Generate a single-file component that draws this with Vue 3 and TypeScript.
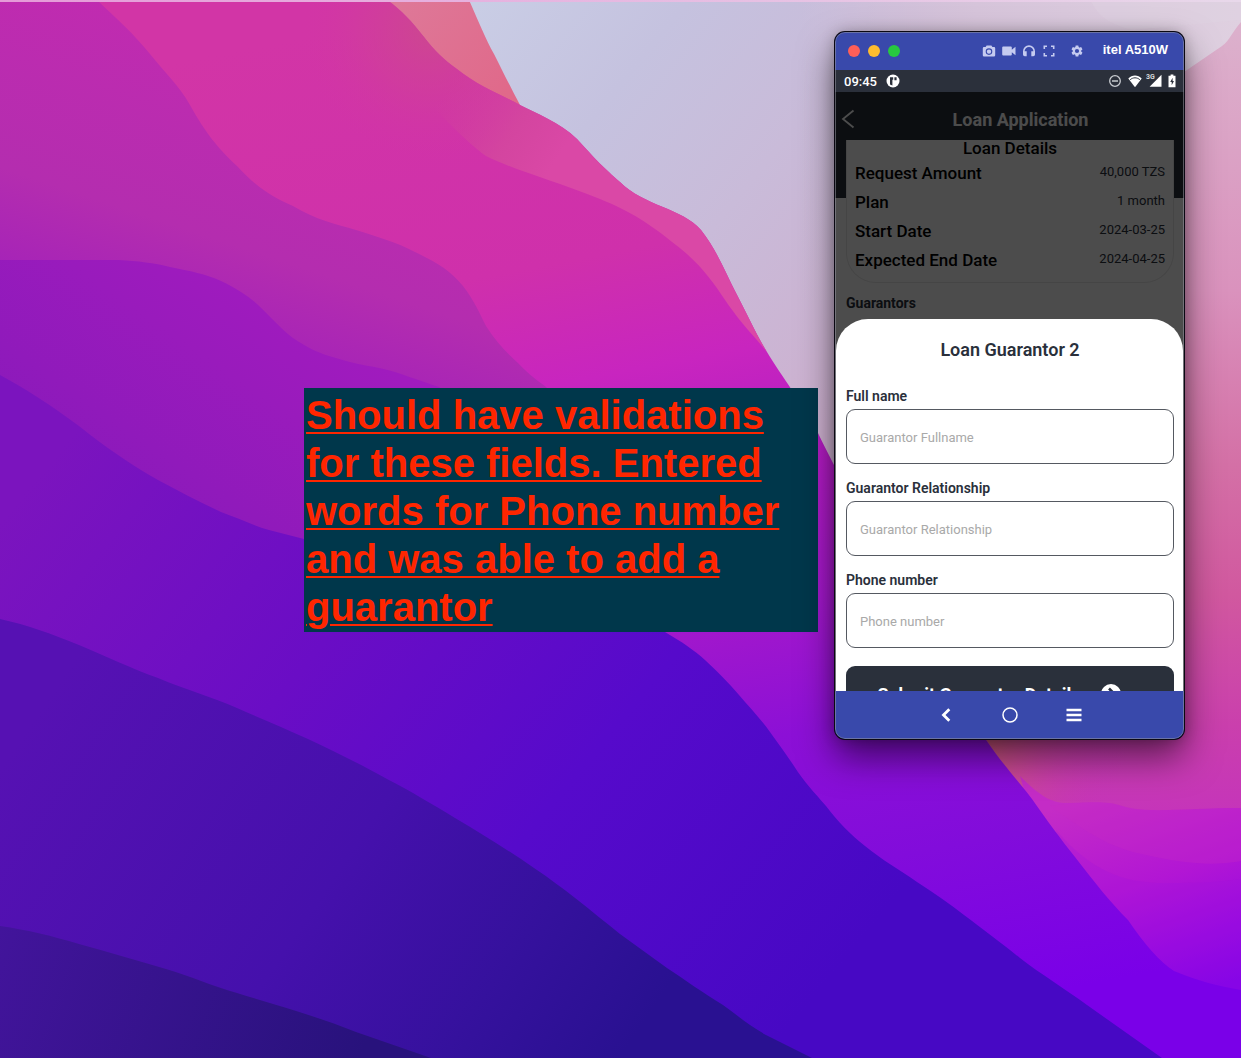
<script setup lang="ts">
import { reactive } from 'vue'

interface Detail {
  label: string
  value: string
}

interface Field {
  key: 'fullName' | 'relationship' | 'phone'
  label: string
  placeholder: string
  type: string
}

const details: Detail[] = [
  { label: 'Request Amount', value: '40,000 TZS' },
  { label: 'Plan', value: '1 month' },
  { label: 'Start Date', value: '2024-03-25' },
  { label: 'Expected End Date', value: '2024-04-25' },
]

const fields: Field[] = [
  { key: 'fullName', label: 'Full name', placeholder: 'Guarantor Fullname', type: 'text' },
  { key: 'relationship', label: 'Guarantor Relationship', placeholder: 'Guarantor Relationship', type: 'text' },
  { key: 'phone', label: 'Phone number', placeholder: 'Phone number', type: 'tel' },
]

const form = reactive({ fullName: '', relationship: '', phone: '' })
</script>

<template>
  <main class="desktop">
    <svg class="wallpaper" viewBox="0 0 1241 1058" preserveAspectRatio="xMidYMid slice" aria-hidden="true">
      <defs>
        <linearGradient id="sky" gradientUnits="userSpaceOnUse" x1="480" y1="0" x2="900" y2="340">
          <stop offset="0" stop-color="#c9cde5" />
          <stop offset=".3" stop-color="#c5c2df" />
          <stop offset=".6" stop-color="#c9bbd9" />
          <stop offset="1" stop-color="#cdb0cf" />
        </linearGradient>
        <linearGradient id="skyTop" gradientUnits="userSpaceOnUse" x1="800" y1="0" x2="1241" y2="0">
          <stop offset="0" stop-color="#d6c4da" stop-opacity="0" />
          <stop offset=".4" stop-color="#d6c4da" />
          <stop offset="1" stop-color="#dfd0e0" />
        </linearGradient>
        <linearGradient id="hill" gradientUnits="userSpaceOnUse" x1="0" y1="30" x2="0" y2="900">
          <stop offset="0" stop-color="#dcb0cc" />
          <stop offset=".3" stop-color="#da92bd" />
          <stop offset=".5" stop-color="#d470a6" />
          <stop offset=".65" stop-color="#d1589f" />
          <stop offset=".8" stop-color="#ca3fad" />
          <stop offset="1" stop-color="#c02ac6" />
        </linearGradient>
        <linearGradient id="glow" gradientUnits="userSpaceOnUse" x1="990" y1="750" x2="1110" y2="800">
          <stop offset="0" stop-color="#cf5580" />
          <stop offset="1" stop-color="#c631ba" stop-opacity="0" />
        </linearGradient>
        <linearGradient id="ridge" gradientUnits="userSpaceOnUse" x1="1080" y1="800" x2="1150" y2="1010">
          <stop offset="0" stop-color="#c42cc6" />
          <stop offset=".45" stop-color="#b216d4" />
          <stop offset=".75" stop-color="#980ae0" />
          <stop offset="1" stop-color="#8002e8" />
        </linearGradient>
        <linearGradient id="peach" gradientUnits="userSpaceOnUse" x1="400" y1="0" x2="510" y2="90">
          <stop offset="0" stop-color="#de7898" />
          <stop offset="1" stop-color="#e0698a" />
        </linearGradient>
        <linearGradient id="body" gradientUnits="userSpaceOnUse" x1="500" y1="0" x2="700" y2="1058">
          <stop offset="0" stop-color="#d235a6" />
          <stop offset=".25" stop-color="#cf30ab" />
          <stop offset=".36" stop-color="#c825bf" />
          <stop offset=".46" stop-color="#b41cc2" />
          <stop offset=".6" stop-color="#a318cb" />
          <stop offset=".72" stop-color="#8c10d6" />
          <stop offset=".85" stop-color="#820cdb" />
          <stop offset="1" stop-color="#7a00e8" />
        </linearGradient>
        <radialGradient id="blush" gradientUnits="userSpaceOnUse" cx="430" cy="30" r="130">
          <stop offset="0" stop-color="#cc4a8c" stop-opacity=".85" />
          <stop offset=".5" stop-color="#cf4296" stop-opacity=".45" />
          <stop offset="1" stop-color="#d235a6" stop-opacity="0" />
        </radialGradient>
        <linearGradient id="rim" gradientUnits="userSpaceOnUse" x1="440" y1="100" x2="550" y2="170">
          <stop offset="0" stop-color="#d04698" stop-opacity="0" />
          <stop offset=".6" stop-color="#d4489e" stop-opacity=".85" />
          <stop offset="1" stop-color="#da48a6" />
        </linearGradient>
        <linearGradient id="plum" gradientUnits="userSpaceOnUse" x1="150" y1="0" x2="50" y2="300">
          <stop offset="0" stop-color="#c12bb0" />
          <stop offset=".65" stop-color="#b42daf" />
          <stop offset=".9" stop-color="#a825b6" />
          <stop offset="1" stop-color="#a222ba" />
        </linearGradient>
        <linearGradient id="violet" gradientUnits="userSpaceOnUse" x1="330" y1="270" x2="130" y2="560">
          <stop offset="0" stop-color="#a41bbf" />
          <stop offset=".4" stop-color="#991bbc" />
          <stop offset="1" stop-color="#8719ba" />
        </linearGradient>
        <linearGradient id="indigo" gradientUnits="userSpaceOnUse" x1="60" y1="450" x2="780" y2="1040">
          <stop offset="0" stop-color="#7b14be" />
          <stop offset=".35" stop-color="#6a0dc5" />
          <stop offset=".65" stop-color="#560acb" />
          <stop offset="1" stop-color="#4708c4" />
        </linearGradient>
        <linearGradient id="navy" gradientUnits="userSpaceOnUse" x1="60" y1="680" x2="620" y2="1058">
          <stop offset="0" stop-color="#5611b3" />
          <stop offset=".5" stop-color="#4510ac" />
          <stop offset=".8" stop-color="#34119c" />
          <stop offset="1" stop-color="#291191" />
        </linearGradient>
        <linearGradient id="deep" gradientUnits="userSpaceOnUse" x1="0" y1="930" x2="360" y2="1058">
          <stop offset="0" stop-color="#42149b" />
          <stop offset="1" stop-color="#28127c" />
        </linearGradient>
        <linearGradient id="strip" x1="0" x2="1" y1="0" y2="0">
          <stop offset="0" stop-color="#e59ad8" />
          <stop offset="1" stop-color="#e8d8ea" />
        </linearGradient>
      </defs>
      <rect width="1241" height="1058" fill="url(#sky)" />
      <rect x="800" width="441" height="300" fill="url(#skyTop)" />
      <path d="M1090 0C1100 18 1110 24 1132 30L1241 20V0Z" fill="#dfd4e3" opacity=".35" />
      <path d="M1241 22C1232 32 1230 40 1222 46L1184 72L980 300V1058H1241Z" fill="url(#hill)" />
      <path d="M980 730H1241V803C1200 812 1160 813 1135 810C1115 800 1090 803 1050 803L1020 790Z" fill="url(#glow)" />
      <path d="M1020 776C1040 796 1052 804 1070 803C1095 802 1108 801 1122 806C1146 814 1190 808 1241 808V1058H1100Z" fill="url(#ridge)" />
      <path d="M1050 806C1085 830 1105 846 1142 854C1185 864 1212 866 1241 861V808C1190 808 1150 814 1122 806C1108 801 1080 802 1050 806Z" fill="#c62ac2" opacity=".3" />
      <path d="M1056 830C1092 872 1125 884 1170 883C1200 883 1220 882 1241 879V1058H1130Z" fill="#a010e0" opacity=".22" />
      <path d="M387 0H469C478 20 486 40 494 54C504 74 512 90 520 105L470 120Z" fill="url(#peach)" />
      <path
        d="M0 0H387C402 10 412 22 424 37C434 50 444 60 457 69C478 86 500 94 520 105C535 113 560 122 577 139C596 160 604 168 620 182C644 206 682 208 701 230C718 252 726 274 735 291C748 316 756 334 767 352C780 374 806 408 818 433C850 500 950 680 986 740C1004 766 1016 778 1032 799C1048 822 1060 838 1075 857C1096 884 1110 902 1128 920C1145 945 1160 962 1174 971C1200 982 1220 986 1241 990V1058H0Z"
        fill="url(#body)"
      />
      <path d="M240 0H387C402 10 412 22 424 37C434 50 444 60 457 69C478 86 500 94 520 105L577 139V260H240Z" fill="url(#blush)" />
      <path
        d="M387 0C402 10 412 22 424 37C434 50 444 60 457 69C478 86 500 94 520 105C535 113 560 122 577 139C596 160 604 168 620 182C644 206 682 208 701 230C718 252 726 274 735 291C748 316 756 334 767 352C747 328 740 322 723 297C704 268 690 256 676 245C650 224 632 212 600 199C552 180 514 170 486 156C450 130 390 60 340 0Z"
        fill="url(#rim)"
      />
      <path
        d="M0 0H97C116 18 134 34 150 54C166 74 178 84 190 105C206 134 218 148 237 166C256 187 274 198 293 206C316 220 336 224 356 230C378 237 396 242 415 252C436 262 450 270 463 286C474 300 480 314 486 326C496 342 508 354 518 363C530 376 540 382 546 387L600 440V560H0Z"
        fill="url(#plum)"
      />
      <path
        d="M0 260H119C138 261 154 263 170 267C190 271 206 274 221 281C236 288 248 296 257 304C270 316 280 328 293 338C306 347 320 354 336 358C356 365 376 366 395 372C416 379 430 384 439 387L520 440V600H0Z"
        fill="url(#violet)"
      />
      <path
        d="M0 375C28 390 52 406 79 426C104 446 130 464 158 480C180 492 200 502 221 512C238 518 252 525 269 530L304 539C450 560 610 590 665 632C682 642 694 650 705 660C718 672 728 682 739 695C750 708 760 718 770 732C780 746 786 754 794 766C804 782 814 792 826 806C838 822 850 834 865 846C882 860 900 870 917 882C934 893 950 904 964 915C984 930 1000 942 1020 958C1042 975 1064 988 1087 1005L1162 1058H0Z"
        fill="url(#indigo)"
      />
      <path
        d="M0 619C28 625 52 634 79 645C106 656 130 668 158 678C186 690 210 696 237 708C262 719 284 728 308 739C336 752 360 764 387 779C412 792 432 804 455 818C482 834 508 850 534 868C564 888 590 910 620 934L667 968C688 982 702 992 723 1005C738 1016 750 1026 766 1035L812 1058H0Z"
        fill="url(#navy)"
      />
      <path d="M0 926C28 930 52 936 79 944C108 952 136 960 166 969C190 976 212 986 237 993C276 1005 316 1016 356 1032L431 1058H0Z" fill="url(#deep)" />
      <rect width="1241" height="2" fill="url(#strip)" />
    </svg>

    <p class="note">
      Should have validations for these fields. Entered words for Phone number and was able to add a guarantor
    </p>

    <section class="phone" aria-label="itel A510W">
      <header class="titlebar">
        <div class="lights">
          <button type="button" class="light red" aria-label="Close"></button>
          <button type="button" class="light yellow" aria-label="Minimise"></button>
          <button type="button" class="light green" aria-label="Zoom"></button>
        </div>
        <div class="tools">
          <button type="button" aria-label="Take screenshot">
            <svg viewBox="0 0 14 14"><path fill-rule="evenodd" d="M4.6 1.5h4.8l1 1.5H12a1.2 1.2 0 0 1 1.2 1.2v7A1.2 1.2 0 0 1 12 12.400H2A1.200 1.200 0 0 1 .8 11.200v-7A1.200 1.200 0 0 1 2 3h1.600zM7 4.300a3.300 3.300 0 1 0 0 6.600 3.300 3.300 0 0 0 0-6.600m0 1.100a2.200 2.200 0 1 1 0 4.400 2.200 2.200 0 0 1 0-4.400" /></svg>
          </button>
          <button type="button" aria-label="Record video">
            <svg viewBox="0 0 14 14"><path d="M1.200 2.500h7.600a1 1 0 0 1 1 1v2.200l3.700-2.900v8.400L9.800 8.300v2.200a1 1 0 0 1-1 1H1.200a1 1 0 0 1-1-1v-7a1 1 0 0 1 1-1" /></svg>
          </button>
          <button type="button" aria-label="Audio">
            <svg viewBox="0 0 14 14"><path d="M7 1.300A6 6 0 0 0 1 7.300v3.200a1.700 1.700 0 0 0 1.700 1.700h2V7.300H2.600a4.400 4.400 0 0 1 8.800 0H9.300v4.900h2a1.700 1.700 0 0 0 1.700-1.700V7.300a6 6 0 0 0-6-6" /></svg>
          </button>
          <button type="button" aria-label="Full screen">
            <svg viewBox="0 0 14 14"><path d="M1.500 1.500H5v1.600H3.100V5H1.500zM9 1.500h3.500V5h-1.600V3.100H9zM1.500 9h1.600v1.900H5v1.600H1.500zM10.900 9h1.600v3.500H9v-1.600h1.900z" /></svg>
          </button>
          <button type="button" class="settings" aria-label="Settings">
            <svg viewBox="0 0 24 24"><path d="M19.140 12.940c.04-.3.06-.61.06-.94 0-.32-.02-.64-.07-.94l2.030-1.580a.49.49 0 0 0 .12-.61l-1.920-3.320a.488.488 0 0 0-.59-.22l-2.390.96c-.5-.38-1.030-.7-1.620-.94l-.36-2.540a.484.484 0 0 0-.48-.41h-3.840c-.24 0-.43.17-.47.41l-.36 2.540c-.59.24-1.130.57-1.620.94l-2.390-.96c-.22-.08-.47 0-.59.22L2.740 8.870c-.12.21-.08.47.12.61l2.030 1.580c-.05.3-.09.63-.09.94s.02.64.07.94l-2.030 1.580a.49.49 0 0 0-.12.61l1.920 3.320c.12.22.37.29.59.22l2.390-.96c.5.38 1.030.7 1.620.94l.36 2.540c.05.24.24.41.48.41h3.840c.24 0 .44-.17.47-.41l.36-2.540c.59-.24 1.130-.56 1.620-.94l2.390.96c.22.08.47 0 .59-.22l1.920-3.320c.12-.22.07-.47-.12-.61zM12 15.600A3.600 3.600 0 1 1 12 8.400a3.600 3.600 0 0 1 0 7.200" /></svg>
          </button>
        </div>
        <span class="device">itel A510W</span>
      </header>

      <div class="status">
        <span class="time">09:45</span>
        <svg class="app-dot" viewBox="0 0 14 14" aria-hidden="true">
          <circle cx="7" cy="7" r="6.500" fill="#fff" />
          <path d="M4 3.200h3.200v2.600H6.400v5.800L4 10.400zM8.400 3.200h2.200v3H8.400z" fill="#2b303b" />
        </svg>
        <div class="signals" aria-hidden="true">
          <svg viewBox="0 0 14 14" width="14" height="14">
            <circle cx="7" cy="7" r="5.300" fill="none" stroke="#c9ccd1" stroke-width="1.300" />
            <path d="M4 7h6" stroke="#c9ccd1" stroke-width="1.600" />
          </svg>
          <svg viewBox="0 0 14 14" width="14" height="14">
            <path d="M7 13.200.3 4.600C4 .6 10 .6 13.700 4.600z" fill="#fff" />
            <path d="M2.200 5.700C5 3.200 9 3.200 11.800 5.700" fill="none" stroke="#2b303b" stroke-width="1" />
          </svg>
          <span class="network">
            <span class="network-type">3G</span>
            <svg viewBox="0 0 14 14" width="14" height="14"><path d="M13.500.8v11.900H1.600z" fill="#fff" /></svg>
          </span>
          <svg viewBox="0 0 8 14" width="8" height="14">
            <path d="M2.600.5h2.800v1.300H7.500v11.400H.5V1.800h2.100z" fill="#fff" />
            <path d="M4.600 3.800 2.200 8h1.500v3.300L6 7H4.600z" fill="#2b303b" />
          </svg>
        </div>
      </div>

      <div class="screen">
        <div class="page">
          <header class="appbar">
            <button type="button" class="back" aria-label="Back">
              <svg viewBox="0 0 14 20" width="14" height="20"><path d="M12.500 1.500 2 10l10.500 8.500" fill="none" stroke="#fff" stroke-width="1.800" /></svg>
            </button>
            <h1>Loan Application</h1>
          </header>
          <section class="card">
            <h2>Loan Details</h2>
            <dl>
              <div v-for="item in details" :key="item.label" class="row">
                <dt>{{ item.label }}</dt>
                <dd>{{ item.value }}</dd>
              </div>
            </dl>
          </section>
          <h2 class="guarantors">Guarantors</h2>
        </div>
        <div class="backdrop"></div>
        <form class="sheet" @submit.prevent>
          <h2>Loan Guarantor 2</h2>
          <div v-for="field in fields" :key="field.key" class="field">
            <label :for="field.key">{{ field.label }}</label>
            <input :id="field.key" v-model="form[field.key]" :type="field.type" :placeholder="field.placeholder" />
          </div>
          <button type="submit" class="submit">
            <span>Submit Guarantor Details</span>
            <svg viewBox="0 0 20 20" width="20" height="20" aria-hidden="true">
              <circle cx="10" cy="10" r="10" fill="#fff" />
              <path d="M8 4.500 13.500 10 8 15.500" fill="none" stroke="#2a303b" stroke-width="2.600" />
            </svg>
          </button>
        </form>
      </div>

      <nav class="navbar" aria-label="Device navigation">
        <button type="button" aria-label="Back">
          <svg viewBox="0 0 16 16"><path d="M11.300 2.200 5.500 8l5.800 5.800" fill="none" stroke="#fff" stroke-width="2.800" /></svg>
        </button>
        <button type="button" aria-label="Home">
          <svg viewBox="0 0 16 16"><circle cx="8" cy="8" r="7" fill="none" stroke="#fff" stroke-width="1.500" /></svg>
        </button>
        <button type="button" aria-label="Recent apps">
          <svg viewBox="0 0 16 16"><path d="M.5 3h15M.5 8h15M.5 13h15" stroke="#fff" stroke-width="2.500" /></svg>
        </button>
      </nav>
    </section>
  </main>
</template>

<style>
body {
  margin: 0;
}
</style>

<style scoped>
.desktop {
  position: relative;
  min-height: 100vh;
  overflow: hidden;
  font-family: Roboto, sans-serif;
}

.wallpaper {
  position: absolute;
  inset: 0;
  width: 100%;
  height: 100%;
}

h1,
h2,
dl,
dd,
p {
  margin: 0;
}

button {
  padding: 0;
  border: 0;
  background: none;
  font: inherit;
  color: inherit;
}

svg {
  display: block;
}

/* Annotation */
.note {
  position: absolute;
  left: 304px;
  top: 388px;
  box-sizing: border-box;
  width: 514px;
  padding: 3px 2px 1px;
  background: #00374b;
  color: #ff2600;
  font: 700 40px/48px "Liberation Sans", Arial, sans-serif;
  text-decoration: underline;
  text-decoration-thickness: 2px;
  text-underline-offset: 3px;
}

/* Mirrored phone window */
.phone {
  position: absolute;
  left: 835px;
  top: 32px;
  display: flex;
  flex-direction: column;
  width: 349px;
  border-radius: 10px;
  overflow: hidden;
  background: #3949ab;
  box-shadow: 0 0 0 1px #0a0812, 0 18px 36px rgba(0, 0, 0, 0.55), 0 0 14px rgba(0, 0, 0, 0.25);
}

.phone::after {
  content: "";
  position: absolute;
  inset: 0;
  border: 1px solid rgba(150, 150, 160, 0.55);
  border-radius: 10px;
  pointer-events: none;
}

.titlebar {
  display: flex;
  align-items: center;
  height: 38px;
  padding: 0 16px 0 13px;
}

.lights {
  display: flex;
  gap: 8px;
}

.light {
  width: 12px;
  height: 12px;
  border-radius: 50%;
}

.red {
  background: #ff5f57;
}

.yellow {
  background: #febc2e;
}

.green {
  background: #28c840;
}

.tools {
  display: flex;
  gap: 6px;
  margin-left: auto;
  fill: #c5cbf0;
}

.tools svg {
  width: 14px;
  height: 14px;
}

.settings {
  margin-left: 8px;
}

.device {
  margin-left: 19px;
  padding-bottom: 2px;
  color: #fff;
  font: 700 13px/16px "Liberation Sans", Arial, sans-serif;
}

.status {
  display: flex;
  align-items: center;
  height: 22px;
  padding: 0 8px 0 9px;
  background: #2b303b;
}

.time {
  color: #fff;
  font-size: 13px;
  font-weight: 500;
}

.app-dot {
  width: 14px;
  height: 14px;
  margin-left: 9px;
}

.signals {
  display: flex;
  align-items: center;
  gap: 6px;
  margin-left: auto;
}

.network {
  position: relative;
}

.network-type {
  position: absolute;
  left: -2px;
  top: 0;
  color: #d5d7da;
  font-size: 7px;
  font-weight: 700;
  line-height: 7px;
}

.screen {
  position: relative;
  height: 599px;
  overflow: hidden;
  background: #fff;
}

.page {
  height: 100%;
  background: linear-gradient(#2a303b 106px, #fff 106px);
}

.appbar {
  display: flex;
  align-items: center;
  height: 48px;
  padding: 0 6px;
}

.appbar h1 {
  flex: 1;
  padding: 8px 0 0 8px;
  color: #fff;
  font-size: 18px;
  font-weight: 700;
  line-height: 24px;
  text-align: center;
}

.back {
  padding-top: 6px;
}

.card {
  margin: 0 10px 0 11px;
  padding: 0 8px 7px;
  border: solid #e8e8e8;
  border-width: 0 1px 1px;
  border-radius: 0 0 30px 30px;
  background: #fff;
}

.card h2 {
  color: #000;
  font-size: 17px;
  font-weight: 500;
  line-height: 16px;
  text-align: center;
}

.card dl {
  margin-top: 3px;
}

.row {
  display: flex;
  justify-content: space-between;
  line-height: 29px;
}

.row dt {
  color: #000;
  font-size: 17px;
  font-weight: 500;
}

.row dd {
  color: #2a303b;
  font-size: 13px;
  line-height: 25px;
}

.guarantors {
  margin: 11px 11px 0;
  color: #2a303b;
  font-size: 14px;
  font-weight: 700;
  line-height: 18px;
}

.backdrop {
  position: absolute;
  inset: 0;
  background: rgba(0, 0, 0, 0.7);
}

.sheet {
  position: absolute;
  left: 1px;
  right: 1px;
  top: 227px;
  padding: 19px 9px 24px 10px;
  border-radius: 32px 32px 0 0;
  background: #fff;
  color: #2a303b;
}

.sheet h2 {
  margin-bottom: 25px;
  font-size: 18px;
  font-weight: 600;
  line-height: 24px;
  text-align: center;
}

.field {
  display: flex;
  flex-direction: column;
  gap: 4px;
  margin-bottom: 15px;
}

.field label {
  font-size: 14px;
  font-weight: 600;
  line-height: 18px;
}

.field input {
  box-sizing: border-box;
  width: 100%;
  height: 55px;
  padding: 2px 13px 0;
  border: 1px solid #555961;
  border-radius: 9px;
  background: #fff;
  color: #2a303b;
  font: 400 13px/18px Roboto, sans-serif;
}

.field input::placeholder {
  color: #a9a9a9;
  opacity: 1;
}

.submit {
  display: flex;
  align-items: center;
  justify-content: center;
  gap: 20px;
  width: 100%;
  height: 56px;
  margin-top: 18px;
  padding-right: 22px;
  border-radius: 9px;
  background: #2a303b;
  color: #fff;
  font-size: 18px;
  font-weight: 700;
}

.navbar {
  display: flex;
  align-items: center;
  justify-content: center;
  gap: 48px;
  height: 48px;
}

.navbar svg {
  width: 16px;
  height: 16px;
}
</style>
